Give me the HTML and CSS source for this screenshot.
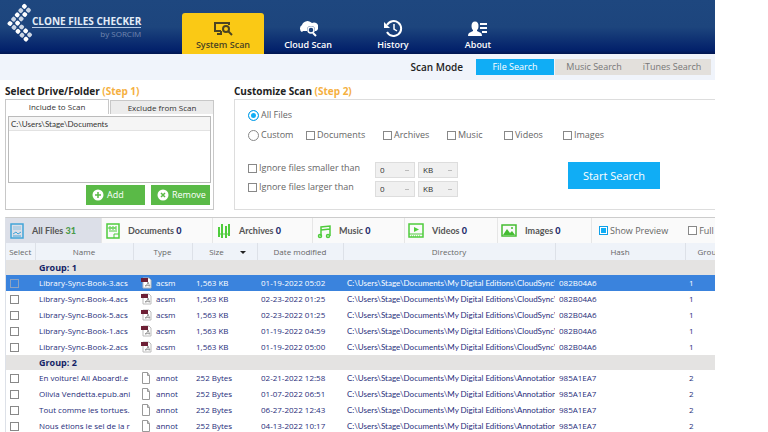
FILE: index.html
```html
<!DOCTYPE html>
<html lang="en">
<head>
    <meta charset="UTF-8">
    <meta name="viewport" content="width=device-width, initial-scale=1.0">
    <title>Clone Files Checker</title>
    <link rel="stylesheet" href="styles.css">
</head>
<body>
    <header class="header">
        <a class="brand" href="#">
            <svg class="logo" viewBox="0 0 28 40" id="logo"></svg>
            <span class="brand-text">
                <span class="brand-name">CLONE FILES CHECKER</span>
                <span class="brand-by">by SORCIM</span>
            </span>
        </a>
        <nav class="nav">
            <a class="nav-item active" href="#">
                <svg viewBox="0 0 20 16" width="20" height="16" fill="none" stroke="currentColor" stroke-width="2">
                    <path d="M8 10H2V2h14v2M4 13h5M8 10v3"/>
                    <circle cx="13" cy="8" r="3"/>
                    <path d="M15 10l4 4"/>
                </svg>
                System Scan
            </a>
            <a class="nav-item" href="#">
                <svg viewBox="0 0 20 16" width="20" height="16">
                    <path fill="currentColor" d="M4 11a4 4 0 0 1 0-7 6 6 0 0 1 10-2 4 4 0 0 1 4 8H5z"/>
                    <circle cx="13" cy="9" r="4" fill="#1b417a"/>
                    <circle cx="13" cy="9" r="3" fill="none" stroke="currentColor" stroke-width="1.500"/>
                    <path d="M15 12l3 3" stroke="currentColor" stroke-width="2"/>
                </svg>
                Cloud Scan
            </a>
            <a class="nav-item" href="#">
                <svg viewBox="0 0 20 18" width="20" height="18" fill="none" stroke="currentColor" stroke-width="2">
                    <path d="M4 6a7.500 7.500 0 1 1 0 7"/>
                    <path d="M11 5v5l3 2" stroke-width="1.500"/>
                    <path d="M1 3v6h6z" fill="currentColor" stroke="none"/>
                </svg>
                History
            </a>
            <a class="nav-item" href="#">
                <svg viewBox="0 0 20 16" width="20" height="16" fill="currentColor">
                    <ellipse cx="7" cy="5" rx="3.500" ry="4.500"/>
                    <path d="M5 8h4v2l4 2q1 1 1 3H0q0-2 1-3l4-2z"/>
                    <path d="M12 2h7v2h-7zM12 6h7v2h-7zM14 10h5v2h-5z"/>
                </svg>
                About
            </a>
        </nav>
    </header>

    <div class="mode-bar">
        <span class="mode-title">Scan Mode</span>
        <div class="modes">
            <button class="mode active">File Search</button>
            <button class="mode">Music Search</button>
            <button class="mode">iTunes Search</button>
        </div>
    </div>

    <main>
        <div class="steps">
            <section class="folders">
                <h2>Select Drive/Folder <span class="step">(Step 1)</span></h2>
                <div class="folder-tabs">
                    <button class="folder-tab active">Include to Scan</button>
                    <button class="folder-tab">Exclude from Scan</button>
                </div>
                <div class="folder-panel">
                    <ul class="folder-list">
                        <li>C:\Users\Stage\Documents</li>
                    </ul>
                    <div class="folder-actions">
                        <button class="green">
                            <svg viewBox="0 0 12 12" width="12" height="12">
                                <circle cx="6" cy="6" r="5.500" fill="#fff"/>
                                <path d="M6 3v6M3 6h6" stroke="#5aba47" stroke-width="1.500"/>
                            </svg>
                            Add
                        </button>
                        <button class="green">
                            <svg viewBox="0 0 12 12" width="12" height="12">
                                <circle cx="6" cy="6" r="5.500" fill="#fff"/>
                                <path d="M4 4l4 4M8 4l-4 4" stroke="#5aba47" stroke-width="1.500"/>
                            </svg>
                            Remove
                        </button>
                    </div>
                </div>
            </section>

            <section class="customize">
                <h2>Customize Scan <span class="step">(Step 2)</span></h2>
                <div class="custom-panel">
                    <label class="check"><input type="radio" name="files" checked>All Files</label>
                    <div class="types">
                        <label class="check"><input type="radio" name="files">Custom</label>
                        <label class="check"><input type="checkbox">Documents</label>
                        <label class="check"><input type="checkbox">Archives</label>
                        <label class="check"><input type="checkbox">Music</label>
                        <label class="check"><input type="checkbox">Videos</label>
                        <label class="check"><input type="checkbox">Images</label>
                    </div>
                    <div class="limits">
                        <div class="limit-rows">
                            <div class="limit">
                                <label class="check"><input type="checkbox">Ignore files smaller than</label>
                                <select aria-label="Smaller than"><option>0</option></select>
                                <select aria-label="Smaller than unit"><option>KB</option></select>
                            </div>
                            <div class="limit">
                                <label class="check"><input type="checkbox">Ignore files larger than</label>
                                <select aria-label="Larger than"><option>0</option></select>
                                <select aria-label="Larger than unit"><option>KB</option></select>
                            </div>
                        </div>
                        <button class="start">Start Search</button>
                    </div>
                </div>
            </section>
        </div>

        <section class="results">
            <div class="filters">
                <button class="filter filter-all active">
                    <svg viewBox="0 0 14 16" width="14" height="16" fill="none" stroke="#42a5d8">
                        <rect x="1" y="1" width="12" height="14" stroke-width="1.500"/>
                        <path d="M3 4h8M3 6h8" stroke-opacity=".5"/>
                        <path d="M3 11l3-2 2 2 3-2M3 13h8"/>
                    </svg>
                    <span>All Files <b class="count">31</b></span>
                </button>
                <button class="filter filter-docs">
                    <svg viewBox="0 0 14 16" width="14" height="16" fill="none" stroke="#4fcc3c">
                        <path d="M1 1h12v14H1z" stroke-width="1.500"/>
                        <path d="M3 4h2v2H3zM6 4h2v2H6zM11 4H9v2h2M3 8h8M8 15v-4h5"/>
                    </svg>
                    <span>Documents <b>0</b></span>
                </button>
                <button class="filter filter-archives">
                    <svg viewBox="0 0 14 16" width="14" height="16" stroke="#4fcc3c" stroke-width="2">
                        <path d="M2 4v10M5 1v14M9 3v12M12 1v12"/>
                        <path d="M1 11h12" stroke-width="1"/>
                    </svg>
                    <span>Archives <b>0</b></span>
                </button>
                <button class="filter filter-music">
                    <svg viewBox="0 0 14 16" width="14" height="16" fill="none" stroke="#4fcc3c" stroke-width="1.500">
                        <path d="M4 13V4l9-1v10M4 7l9-1"/>
                        <circle cx="3" cy="13" r="1.500"/>
                        <circle cx="11" cy="13" r="1.500"/>
                    </svg>
                    <span>Music <b>0</b></span>
                </button>
                <button class="filter filter-videos">
                    <svg viewBox="0 0 16 16" width="16" height="16" fill="none" stroke="#4fcc3c">
                        <rect x="1" y="1" width="14" height="13" stroke-width="1.500"/>
                        <path d="M1 11h14"/>
                        <path d="M3 13h10" stroke-dasharray="1 1"/>
                        <path d="M6 4l5 2.500-5 2.500z" fill="#4fcc3c" stroke="none"/>
                    </svg>
                    <span>Videos <b>0</b></span>
                </button>
                <button class="filter filter-images">
                    <svg viewBox="0 0 16 14" width="16" height="14" fill="#45bd32">
                        <rect x="1" y="1" width="14" height="11" fill="none" stroke="#45bd32" stroke-width="1.500"/>
                        <path d="M2 11l4-6 3 4 2-2 3 4z"/>
                        <circle cx="11" cy="4" r="1"/>
                    </svg>
                    <span>Images <b>0</b></span>
                </button>
                <div class="view-options">
                    <label class="check"><input type="checkbox" checked>Show Preview</label>
                    <label class="check"><input type="checkbox">Full</label>
                </div>
            </div>

            <table class="files">
                <colgroup>
                    <col class="col-select">
                    <col class="col-name">
                    <col class="col-type">
                    <col class="col-size">
                    <col class="col-date">
                    <col>
                    <col class="col-hash">
                    <col class="col-group">
                </colgroup>
                <thead>
                    <tr>
                        <th>Select</th>
                        <th>Name</th>
                        <th>Type</th>
                        <th class="sorted">Size</th>
                        <th>Date modified</th>
                        <th>Directory</th>
                        <th>Hash</th>
                        <th class="last">Grou</th>
                    </tr>
                </thead>
                <tbody id="rows"></tbody>
            </table>
        </section>
    </main>

    <script src="script.js"></script>
</body>
</html>
```
FILE: styles.css
```css
* {
    box-sizing: border-box;
}
body {
    font-family: "Open Sans", "Noto Sans", sans-serif;
    font-size: 9px;
    line-height: 12px;
    color: #555;
    margin: 0;
    padding-right: 53px;
    background: #fff;
    overflow: hidden;
}
button, select, input {
    font: inherit;
    color: inherit;
    margin: 0;
    padding: 0;
    border: 0;
    border-radius: 0;
}
button {
    cursor: pointer;
}
svg {
    flex: none;
}
h2 {
    font-size: 10px;
    line-height: 16px;
    font-weight: 700;
    color: #222;
    margin: 0;
}
.step {
    color: #f5b041;
}

/* header */
.header {
    display: flex;
    height: 54px;
    background: linear-gradient(#1e477f 0, #1d457d 50%, #02206a 94%, #011650);
    color: #fff;
}
.brand {
    display: flex;
    width: 182px;
    padding: 3px 0 0 7px;
    color: #fff;
    text-decoration: none;
}
.logo {
    width: 28px;
    height: 40px;
}
.brand-text {
    display: flex;
    flex-direction: column;
    align-items: flex-end;
    margin-left: -3px;
    padding-top: 12px;
}
.brand-name {
    font-size: 10px;
    line-height: 12px;
    font-weight: 700;
    color: #e4edf8;
    border-bottom: 1px solid #b9cce6;
    white-space: nowrap;
}
.brand-by {
    font-size: 8px;
    color: #7186b0;
}
.nav {
    display: flex;
    gap: 3px;
    padding-top: 13px;
}
.nav-item {
    display: flex;
    flex-direction: column;
    align-items: center;
    justify-content: flex-end;
    width: 82px;
    padding-bottom: 3px;
    color: #fff;
    font-weight: 600;
    text-decoration: none;
}
.nav-item svg {
    margin-bottom: 2px;
}
.nav-item.active {
    background: #fac915;
    color: #4b4422;
    border-radius: 3px 3px 0 0;
}

/* scan mode */
.mode-bar {
    display: flex;
    align-items: center;
    justify-content: flex-end;
    gap: 13px;
    height: 26px;
    padding-right: 4px;
    background: #f0f4fb;
}
.mode-title {
    font-size: 10px;
    font-weight: 600;
    color: #222;
}
.modes {
    display: flex;
}
.mode {
    width: 78px;
    height: 16px;
    background: #e3e0dc;
    color: #777;
}
.mode.active {
    background: #10adf5;
    color: #fff;
    margin-right: 1px;
}

/* steps */
.steps {
    display: flex;
    gap: 20px;
    padding: 3px 0 7px 5px;
}
.folders {
    display: flex;
    flex-direction: column;
    width: 209px;
}
.folder-tabs {
    display: flex;
    align-items: flex-end;
    gap: 1px;
}
.folder-tab {
    flex: 1;
    height: 14px;
    font-size: 8px;
    color: #333;
    background: #ececec;
    border: 1px solid #c8c8c8;
    border-bottom: 0;
}
.folder-tab.active {
    height: 15px;
    background: #fff;
}
.folder-panel {
    flex: 1;
    padding: 2px;
    border: 1px solid #c8c8c8;
    border-top: 0;
}
.folder-list {
    height: 67px;
    margin: 0;
    padding: 0;
    border: 1px solid #bbb;
    list-style: none;
    font-family: Lato, sans-serif;
    font-size: 8px;
    color: #333;
}
.folder-list li {
    height: 14px;
    padding: 1px 2px;
    background: #f5f5f5;
    border-bottom: 1px solid #e2e2e2;
}
.folder-actions {
    display: flex;
    justify-content: flex-end;
    gap: 6px;
    padding: 2px 1px 2px 0;
}
.green {
    display: flex;
    align-items: center;
    gap: 3px;
    width: 59px;
    height: 20px;
    padding-left: 6px;
    background: #5aba47;
    color: #fff;
}
.customize {
    flex: 1;
}
.custom-panel {
    height: 111px;
    padding: 9px 0 0 13px;
    border: 1px solid #ddd;
    border-right: 0;
}
.check {
    display: flex;
    align-items: center;
    gap: 2px;
    color: #666;
    white-space: nowrap;
}
.check input, .files input {
    appearance: none;
    flex: none;
    width: 9px;
    height: 9px;
    background: #fff;
    border: 1px solid #888;
}
.check input[type="radio"] {
    width: 11px;
    height: 11px;
    border-radius: 50%;
}
.check input:checked {
    border-color: #10a0e8;
    background: #10adf5;
    box-shadow: inset 0 0 0 1px #fff;
}
.check input[type="radio"]:checked {
    box-shadow: inset 0 0 0 2px #fff;
}
.types {
    display: grid;
    grid-template-columns: 58px 77px 64px 57px 59px auto;
    justify-content: start;
    margin-top: 8px;
}
.limits {
    display: flex;
    margin-top: 21px;
}
.limit-rows {
    display: flex;
    flex-direction: column;
    gap: 3px;
    width: 320px;
}
.limit {
    display: grid;
    grid-template-columns: 124px 40px 40px;
    column-gap: 3px;
    align-items: start;
}
.limit select {
    appearance: none;
    height: 16px;
    padding-left: 4px;
    font-size: 8px;
    background: #f0f0f0 linear-gradient(#bbb, #bbb) no-repeat right 5px center / 4px 1px;
    border: 1px solid #ddd;
    color: #333;
}
.start {
    width: 92px;
    height: 27px;
    background: #10adf5;
    color: #fff;
    font-size: 11px;
}

/* results */
.results {
    margin-left: 5px;
    border-top: 1px solid #ccc;
    border-left: 1px solid #dde1e8;
    overflow: hidden;
}
.filters {
    display: flex;
    height: 25px;
    background: #fafafa;
}
.filter {
    display: flex;
    align-items: center;
    flex: none;
    gap: 8px;
    padding-left: 4px;
    background: #fafafa;
    border-right: 1px solid #e6e6e6;
    font-family: Lato, sans-serif;
    font-weight: 700;
    white-space: nowrap;
}
.filter.active {
    background: #dcdfe8;
}
.filter b {
    color: #1d2a6b;
}
.filter .count {
    color: #4a9a4a;
}
.filter-all {
    width: 96px;
}
.filter-docs {
    width: 111px;
}
.filter-archives {
    width: 100px;
}
.filter-music {
    width: 92px;
}
.filter-videos {
    width: 93px;
    padding-left: 3px;
}
.filter-images {
    width: 94px;
    padding-left: 3px;
}
.view-options {
    display: flex;
    gap: 20px;
    padding-left: 7px;
}
.files {
    width: 100%;
    table-layout: fixed;
    border-collapse: collapse;
    color: #1f2d7a;
    font-size: 8px;
    line-height: 12px;
}
.col-select {
    width: 29px;
}
.col-name {
    width: 98px;
}
.col-type {
    width: 59px;
}
.col-size {
    width: 65px;
}
.col-date {
    width: 86px;
}
.col-hash {
    width: 130px;
}
.col-group {
    width: 30px;
}
.files th {
    height: 17px;
    padding: 0;
    background: #eff3f9;
    border-right: 1px solid #dde1e8;
    color: #666;
    font-weight: 400;
    text-align: center;
}
.files .last {
    padding-left: 12px;
    border-right: 0;
    text-align: left;
}
.sorted::after {
    content: "";
    display: inline-block;
    margin: 0 -6px 1px 16px;
    border: 3px solid transparent;
    border-top-color: #222;
    border-bottom: 0;
}
.files td {
    height: 16px;
    padding: 1px 4px;
    white-space: nowrap;
}
.files .dir {
    padding-right: 0;
    font-family: Lato, sans-serif;
    overflow: hidden;
}
.files .group td {
    height: 15px;
    padding: 1px 0 0 33px;
    background: #e4e3e2;
    font-size: 9px;
    font-weight: 700;
    color: #141f66;
}
.files .selected {
    background: #3a83dd;
    color: #fff;
}
.files input {
    display: block;
}
.files .selected input {
    background: none;
    border-color: #8fa3c0;
}
.type {
    display: flex;
    align-items: center;
    gap: 4px;
    padding-left: 3px;
}
```
FILE: script.js
```js
// chevron logo: two arms, two dots wide, on a slanted lattice
const logo = document.getElementById("logo");
const svgNS = "http://www.w3.org/2000/svg";
function dot(x, y, color) {
    const rect = document.createElementNS(svgNS, "rect");
    rect.setAttribute("x", x - 2.2);
    rect.setAttribute("y", y - 2.2);
    rect.setAttribute("width", 4.4);
    rect.setAttribute("height", 4.4);
    rect.setAttribute("rx", 1.5);
    rect.setAttribute("fill", color);
    rect.setAttribute("transform", `rotate(43 ${x} ${y})`);
    logo.appendChild(rect);
}
for (let up = 0; up < 5; up++) {
    for (let down = 0; down < 5; down++) {
        if (up > 1 && down > 1) continue;
        dot(3 + up * 3.6 + down * 4, 20.5 - up * 4.3 + down * 3.9, (up + down) % 2 ? "#ccd6e4" : "#fff");
    }
}

const sync = "C:\\Users\\Stage\\Documents\\My Digital Editions\\CloudSync\\I";
const notes = "C:\\Users\\Stage\\Documents\\My Digital Editions\\Annotations";
const groups = [
    { id: 1, type: "acsm", size: "1,563 KB", dir: sync, hash: "082B04A6", files: [
        ["Library-Sync-Book-3.acs", "01-19-2022 05:02"],
        ["Library-Sync-Book-4.acs", "02-23-2022 01:25"],
        ["Library-Sync-Book-5.acs", "02-23-2022 01:25"],
        ["Library-Sync-Book-1.acs", "01-19-2022 04:59"],
        ["Library-Sync-Book-2.acs", "01-19-2022 05:00"]
    ] },
    { id: 2, type: "annot", size: "252 Bytes", dir: notes, hash: "985A1EA7", files: [
        ["En voiture! All Aboard!.e", "02-21-2022 12:58"],
        ["Olivia Vendetta.epub.ani", "01-07-2022 06:51"],
        ["Tout comme les tortues.", "06-27-2022 12:43"],
        ["Nous étions le sel de la r", "04-13-2022 10:17"]
    ] }
];

const icons = {
    acsm: `<svg viewBox="0 0 12 12" width="12" height="12">
        <path d="M3 1h6l2 2v8H3z" fill="#fff" stroke="#bbb"/>
        <path d="M1 1h7v4H1z" fill="#6d1f35"/>
        <path d="M5 9q3-1 3-4 1 3 2 4-2-1-5 0" fill="none" stroke="#999"/>
    </svg>`,
    annot: `<svg viewBox="0 0 12 12" width="12" height="12">
        <path d="M2.500.5h5l2 3v8h-7zM7.500.5v3h2" fill="#fff" stroke="#999"/>
    </svg>`
};

const rows = document.getElementById("rows");
groups.forEach(group => {
    rows.insertAdjacentHTML("beforeend", `<tr class="group"><td colspan="8">Group: ${group.id}</td></tr>`);
    group.files.forEach(([name, date], index) => {
        const selected = group.id === 1 && index === 0 ? "selected" : "";
        rows.insertAdjacentHTML("beforeend", `<tr class="${selected}">
            <td><input type="checkbox" aria-label="${name}"></td>
            <td>${name}</td>
            <td><span class="type">${icons[group.type]}${group.type}</span></td>
            <td>${group.size}</td>
            <td>${date}</td>
            <td class="dir">${group.dir}</td>
            <td>${group.hash}</td>
            <td>${group.id}</td>
        </tr>`);
    });
});
```
